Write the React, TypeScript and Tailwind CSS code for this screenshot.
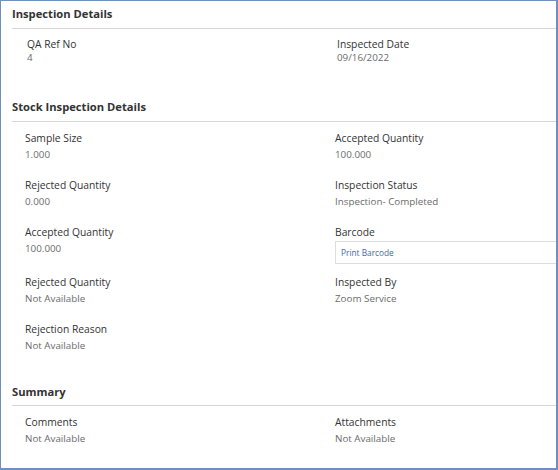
const font = { fontFamily: '"Open Sans", "Liberation Sans", sans-serif' }

type Field = { label: string; value?: string; barcode?: boolean }

function Heading({ title, pad }: { title: string; pad: string }) {
  return (
    <div className={`ml-[11px] border-b border-[#d6d6d6] ${pad}`}>
      <h2 className="text-[11.2px] font-bold leading-[16px] text-[#333]">{title}</h2>
    </div>
  )
}

function Item({ f, gap }: { f: Field; gap: string }) {
  return (
    <div>
      <div className="text-[10.3px] leading-[14px] text-[#333]">{f.label}</div>
      {f.barcode ? (
        <div className="mt-[2px] h-[23px] -mr-[40px] border border-[#dcdcdc] pl-[5px] text-[8.3px] leading-[21px] text-[#4467b0]">
          Print Barcode
        </div>
      ) : (
        <div className={`${gap} text-[9.8px] leading-[14px] text-[#6b6b6b]`}>{f.value}</div>
      )}
    </div>
  )
}

const stockRows: { h: string; cells: Field[] }[] = [
  { h: 'h-[47px]', cells: [{ label: 'Sample Size', value: '1.000' }, { label: 'Accepted Quantity', value: '100.000' }] },
  { h: 'h-[47px]', cells: [{ label: 'Rejected Quantity', value: '0.000' }, { label: 'Inspection Status', value: 'Inspection- Completed' }] },
  { h: 'h-[50px]', cells: [{ label: 'Accepted Quantity', value: '100.000' }, { label: 'Barcode', barcode: true }] },
  { h: 'h-[47px]', cells: [{ label: 'Rejected Quantity', value: 'Not Available' }, { label: 'Inspected By', value: 'Zoom Service' }] },
  { h: 'h-[31px]', cells: [{ label: 'Rejection Reason', value: 'Not Available' }] },
]

export default function App() {
  return (
    <div
      style={font}
      className="w-[558px] h-[470px] overflow-hidden bg-white border-l border-t border-r-2 border-b-2 border-[#6f8fbd]"
    >
      {/* Inspection Details */}
      <Heading title="Inspection Details" pad="pt-[5px] pb-[6px]" />
      <div className="grid grid-cols-[310px_1fr] pl-[26px] pt-[8px]">
        <Item f={{ label: 'QA Ref No', value: '4' }} gap="mt-0" />
        <Item f={{ label: 'Inspected Date', value: '09/16/2022' }} gap="mt-0" />
      </div>

      {/* Stock Inspection Details */}
      <div className="mt-[34px]">
        <Heading title="Stock Inspection Details" pad="pb-[6px]" />
      </div>
      <div className="pl-[24px] pt-[9px]">
        {stockRows.map((r, i) => (
          <div key={i} className={`grid grid-cols-[310px_1fr] ${r.h}`}>
            {r.cells.map((c) => (
              <Item key={c.label} f={c} gap="mt-[3px]" />
            ))}
          </div>
        ))}
      </div>

      {/* Summary */}
      <div className="mt-[31px]">
        <Heading title="Summary" pad="pb-[5px]" />
      </div>
      <div className="grid grid-cols-[310px_1fr] pl-[24px] pt-[9px]">
        <Item f={{ label: 'Comments', value: 'Not Available' }} gap="mt-[3px]" />
        <Item f={{ label: 'Attachments', value: 'Not Available' }} gap="mt-[3px]" />
      </div>
    </div>
  )
}
